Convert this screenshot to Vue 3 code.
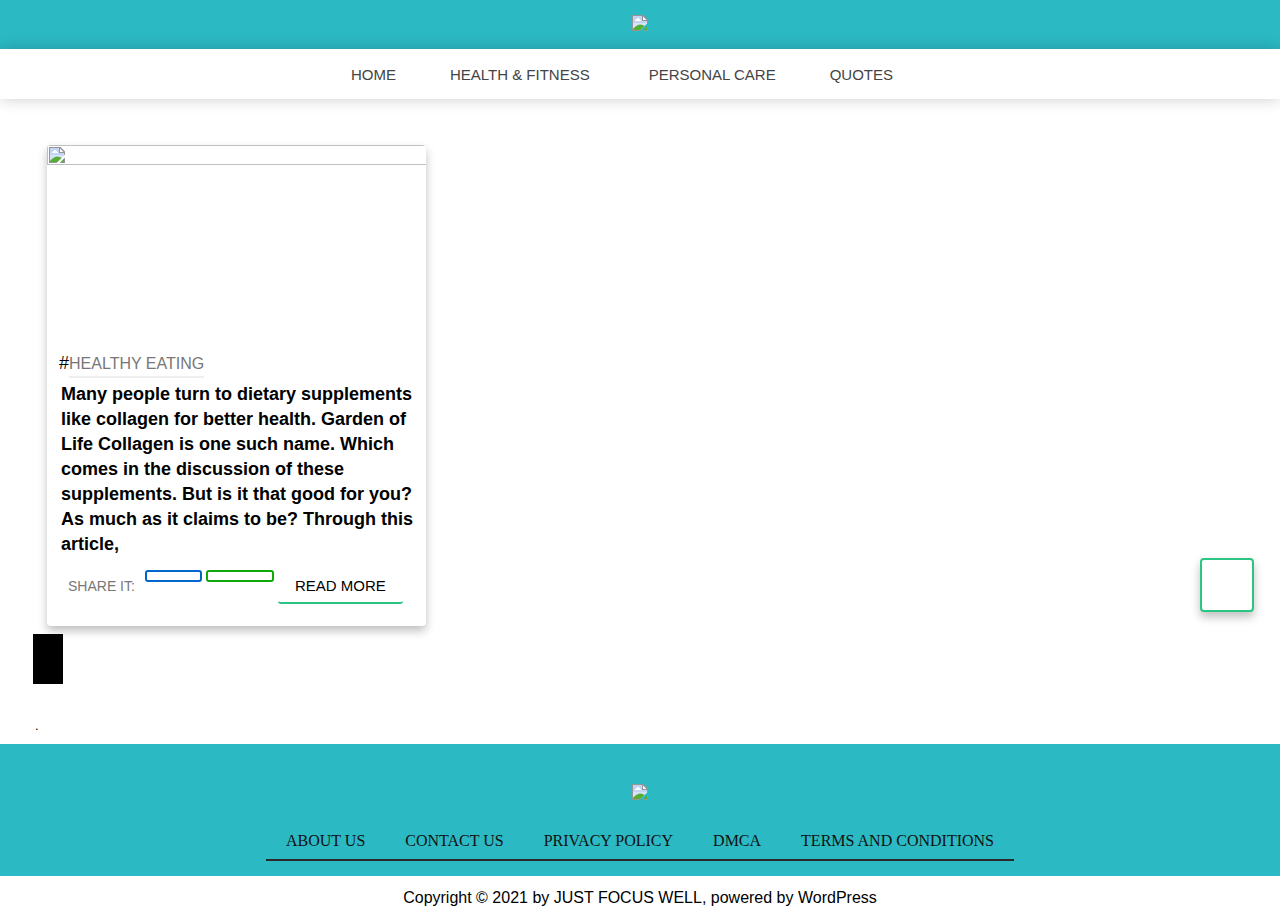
<script setup>
import { h } from 'vue'

const menu = [
  { label: 'HOME' },
  { label: 'HEALTH & FITNESS', parent: true },
  { label: 'PERSONAL CARE' },
  { label: 'QUOTES' },
]
const footerLinks = ['ABOUT US', 'CONTACT US', 'PRIVACY POLICY', 'DMCA', 'TERMS AND CONDITIONS']

const PictureIcon = () =>
  h('svg', { width: 16, height: 16, viewBox: '0 0 16 16', 'aria-hidden': 'true' }, [
    h('path', { d: 'M1 1H11L15 5V8.5L8.5 15H1Z', fill: '#c3d5f6' }),
    h('path', { d: 'M1 8H15V8.5L8.5 15H1Z', fill: '#d6e2f9' }),
    h('path', { d: 'M3 6V5H4V4H5V3H7V4H8V5H9V6Z', fill: '#fff' }),
    h('path', { d: 'M1 15V14Q4 10 8 9.5Q11 9.5 12.5 11L8.5 15ZM15 11.5V15H11.5Z', fill: '#58ad34' }),
    h('path', { d: 'M11 1L15 5H11Z', fill: '#fff' }),
    h('path', {
      d: 'M0 0H11.5L16 4.5V7.5L15 8.5V6H10V1H1V15H8.5L7.5 16H0ZM11 1.5V5H14.5ZM16 10.5V16H10.5L11.5 15H15V11.5Z',
      fill: '#959595',
      'fill-rule': 'evenodd',
    }),
  ])
</script>

<template>
  <div class="page">
    <header class="brand"><a href="#" aria-label="Just Focus Well"><PictureIcon /></a></header>
    <nav class="menu">
      <a v-for="m in menu" :key="m.label" href="#" :class="{ parent: m.parent }">{{ m.label }}</a>
    </nav>

    <main>
      <article class="card">
        <div class="media"><div class="photo"><PictureIcon /></div></div>
        <p class="tag">#<a href="#">HEALTHY EATING</a></p>
        <h2>Many people turn to dietary supplements like collagen for better health. Garden of Life Collagen is one such name. Which comes in the discussion of these supplements. But is it that good for you? As much as it claims to be? Through this article,</h2>
        <div class="actions">
          <span class="share">SHARE IT:</span>
          <a class="pill facebook" href="#" aria-label="Facebook"></a>
          <a class="pill whatsapp" href="#" aria-label="WhatsApp"></a>
          <a class="more" href="#">READ MORE</a>
        </div>
      </article>
      <div class="block"></div>
      <p class="dot">.</p>
    </main>

    <footer>
      <div class="foot">
        <a class="foot-logo" href="#" aria-label="Just Focus Well"><PictureIcon /></a>
        <div class="foot-links">
          <a v-for="l in footerLinks" :key="l" href="#">{{ l }}</a>
        </div>
      </div>
      <p class="copy">Copyright © 2021 by JUST FOCUS WELL, powered by WordPress</p>
    </footer>
    <button class="top" type="button" aria-label="Back to top"></button>
  </div>
</template>

<style>
body {
  margin: 0;
  background: #fff;
}
</style>

<style scoped>
.page {
  font-family: "Liberation Sans", Arial, sans-serif;
  font-size: 16px;
  color: #000;
}
a {
  color: inherit;
  text-decoration: none;
}
svg {
  display: block;
}
p,
h2 {
  margin: 0;
}
.brand {
  display: flex;
  justify-content: center;
  padding: 15px 0 18px;
  background: #2bb9c3;
}
.menu {
  position: relative;
  display: flex;
  justify-content: center;
  gap: 54px;
  padding: 17px 36px 15px 0;
  background: #fff;
  box-shadow: 0 0 15px rgba(0, 0, 0, 0.2);
  font-size: 15px;
  line-height: 18px;
  color: #444;
}
.menu .parent {
  padding-right: 5px;
}
main {
  padding: 46px 33px 8px;
}
.card {
  box-sizing: border-box;
  width: 379px;
  max-width: 100%;
  margin-left: 14px;
  padding-bottom: 22px;
  border-radius: 4px;
  overflow: hidden;
  background: #fff;
  box-shadow: 0 5px 10px rgba(0, 0, 0, 0.25);
}
.media {
  height: 200px;
}
.photo {
  padding: 1px;
  border: 1px solid #c0c0c0;
  border-right: 0;
}
.tag {
  padding: 8px 12px 0;
  font-size: 18px;
  line-height: 20px;
}
.tag a {
  display: inline-block;
  padding-bottom: 2px;
  border-bottom: 2px solid #eee;
  font-size: 16px;
  color: #777;
}
h2 {
  padding: 4px 8px 0 14px;
  font-size: 18px;
  line-height: 25px;
}
.actions {
  display: flex;
  align-items: flex-start;
  gap: 4px;
  padding: 13px 21px 0;
}
.share {
  padding: 7px 6px 0 0;
  font-size: 14px;
  line-height: 18px;
  color: #777;
}
.pill {
  box-sizing: border-box;
  width: 57px;
  height: 12px;
  border: 2px solid #0066cc;
  border-radius: 3px;
}
.pill.whatsapp {
  width: 68px;
  border-color: #0fa80f;
}
.more {
  padding: 7px 17px;
  border-bottom: 2px solid #2bc484;
  border-radius: 3px;
  font-size: 15px;
  line-height: 18px;
}
.block {
  width: 30px;
  height: 50px;
  margin-top: 8px;
  background: #000;
}
.dot {
  padding: 32px 0 0 2px;
  font-size: 13px;
  line-height: 20px;
}
.foot {
  display: flex;
  flex-direction: column;
  align-items: center;
  padding: 40px 20px 15px;
  background: #2bb9c3;
}
.foot-links {
  display: flex;
  flex-wrap: wrap;
  justify-content: center;
  gap: 40px;
  margin-top: 31px;
  padding: 0 20px 8px;
  border-bottom: 2px solid #2a2a2a;
  font-family: "Liberation Serif", "Times New Roman", serif;
  line-height: 20px;
  color: #111;
}
.copy {
  padding: 12px 20px 14px;
  line-height: 19px;
  text-align: center;
}
.top {
  position: fixed;
  right: 26px;
  bottom: 309px;
  width: 54px;
  height: 54px;
  border: 2px solid #2bc484;
  border-radius: 4px;
  background: #fff;
  box-shadow: 0 5px 10px rgba(0, 0, 0, 0.25);
}
</style>
